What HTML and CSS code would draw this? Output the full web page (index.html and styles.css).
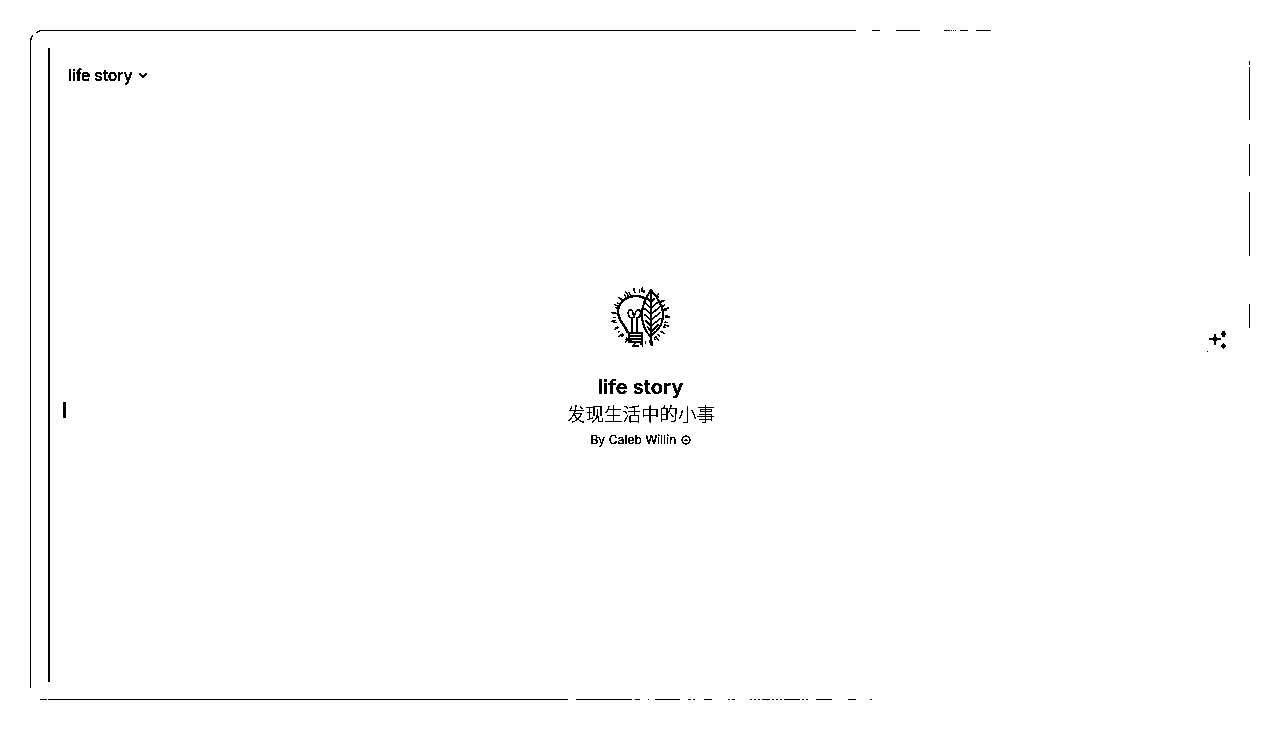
FILE: index.html
```html
<!DOCTYPE html>
<html lang="en">
<head>
    <meta charset="UTF-8">
    <meta name="viewport" content="width=device-width, initial-scale=1.0">
    <title>life story</title>
    <link rel="stylesheet" href="styles.css">
</head>
<body>
    <svg class="defs" width="0" height="0">
        <filter id="threshold" color-interpolation-filters="sRGB">
            <feColorMatrix type="saturate" values="0"/>
            <feComponentTransfer>
                <feFuncR type="discrete" tableValues="0 0 0 1"/>
                <feFuncG type="discrete" tableValues="0 0 0 1"/>
                <feFuncB type="discrete" tableValues="0 0 0 1"/>
            </feComponentTransfer>
        </filter>
    </svg>

    <div class="page">
        <!-- window edge, broken up like the reference -->
        <svg class="frame" width="1280" height="729" viewBox="0 0 1280 729">
            <path d="M30.5 688V44Q30.5 37 33 35M36 33Q38 31 41 30.5H856M872 30.5H880M896 30.5H920M944 30.5H950M951 30.5H952M953 30.5H954M955 30.5H956M960 30.5H968M976 30.5H991"/>
            <path d="M1249.5 61V65M1249.5 67V120M1249.5 144V176M1249.5 192V256M1249.5 304V328"/>
            <path d="M40 699.5H47M48 699.5H568M576 699.5H632M635 699.5H640M648 699.5H649M655 699.5H680M688 699.5H691M693 699.5H695M704 699.5H712M728 699.5H730M732 699.5H735M750 699.5H752M754 699.5H756M758 699.5H760M762 699.5H770M772 699.5H774M776 699.5H778M780 699.5H782M784 699.5H800M802 699.5H804M806 699.5H808M816 699.5H832M848 699.5H856M870 699.5H872"/>
        </svg>

        <div class="pane">
            <header class="topbar">
                <span class="model-name">life story</span>
                <svg class="chevron" width="10" height="10" viewBox="0 0 10 10"><path d="M1.5 3.5L5 7L8.5 3.5"/></svg>
            </header>

            <main class="welcome">
                <svg class="logo" width="64" height="64" viewBox="0 0 64 64">
                    <g transform="translate(0 2)">
                        <circle class="rays" cx="32.5" cy="29" r="26"/>
                        <circle class="rays rays-short" cx="32.5" cy="29" r="27"/>
                        <!-- bulb -->
                        <path class="bulb-glass" d="M20 45C18 38 10 33 10 24C10 14 19 8 28 8C33 8 37 10 40 12"/>
                        <path d="M21 45H35M21 48H35M21 51H35M21 54H34M24 58H31"/>
                        <path d="M21 45V55M34 45V55"/>
                        <path d="M24 45V30C20 30 19 23 22 22C25 21 25 26 26 29C27 26 28 21 31 22C34 23 33 29 29 30V45"/>
                        <!-- leaf -->
                        <path class="leaf" d="M43 2C38 9 34 17 34 26C34 36 37 43 42 48C49 44 55 37 55 26C55 17 49 9 43 2Z"/>
                        <path class="rib" d="M43 3V48L44 58"/>
                        <path d="M43 14L39 10M43 14L47 10M43 20L37 15M43 20L50 14M43 26L36 20M43 26L52 19M43 32L36 26M43 32L53 24M43 38L37 32M43 38L53 30M43 44L39 38M43 44L51 36"/>
                    </g>
                </svg>
                <h1 class="title">life story</h1>
                <p class="tagline">发现生活中的小事</p>
                <p class="byline">By Caleb Willin
                    <svg class="author-icon" width="10" height="10" viewBox="0 0 10 10"><circle cx="5" cy="5" r="4"/><path d="M3.5 5H6.5"/></svg>
                </p>
            </main>
        </div>

        <span class="handle"></span>

        <svg class="spark" width="24" height="24" viewBox="0 0 24 24">
            <path d="M9 2L10.4 6.6L15.5 8L10.4 9.4L9 14.5L7.6 9.4L2.5 8L7.6 6.6Z"/>
            <path d="M17.5 -0.5L19 1.5L20 3L19 4.5L17.5 6.5L16 4.5L15 3L16 1.5Z"/>
            <path d="M17.5 11.5L18.6 14L20.5 15L18.6 16L17.5 18.5L16.4 16L14.5 15L16.4 14Z"/>
            <rect x="1" y="20" width="1" height="1"/>
        </svg>
    </div>
</body>
</html>
```

FILE: styles.css
```css
body {
    margin: 0;
    background: #ffffff;
    color: #000000;
    font-family: Inter, "Noto Sans CJK SC", sans-serif;
}

.defs {
    display: block;
    height: 0;
}

.page {
    position: relative;
    display: flex;
    box-sizing: border-box;
    height: 729px;
    padding: 48px 48px 47px;
    overflow: hidden;
    background: #ffffff;
    filter: url(#threshold);
}

.frame {
    position: absolute;
    top: 0;
    left: 0;
}

.frame path {
    fill: none;
    stroke: #000000;
    stroke-width: 1;
}

.pane {
    flex: 1;
    display: flex;
    flex-direction: column;
    border-left: 2px solid #000000;
}

.topbar {
    display: flex;
    align-items: center;
    gap: 5px;
    height: 54px;
    padding-left: 18px;
    font-size: 16px;
    font-weight: 500;
    letter-spacing: -0.2px;
}

.chevron path {
    fill: none;
    stroke: #000000;
    stroke-width: 1.6;
}

.welcome {
    flex: 1;
    display: flex;
    flex-direction: column;
    align-items: center;
    justify-content: center;
    padding: 0 2px 48px 0;
}

.logo {
    margin-bottom: 24px;
}

.logo path {
    fill: none;
    stroke: #000000;
    stroke-width: 1.2;
}

.logo .bulb-glass {
    stroke-width: 2;
}

.logo .leaf {
    fill: #ffffff;
    stroke-width: 1.6;
}

.logo .rib {
    stroke-width: 1.6;
}

.logo .rays {
    fill: none;
    stroke: #000000;
    stroke-width: 3;
    stroke-dasharray: 1 4;
}

.logo .rays-short {
    stroke-width: 5;
    stroke-dasharray: 1 7;
}

.title {
    margin: 0 0 0 1px;
    font-size: 20px;
    line-height: 26px;
    font-weight: 600;
    letter-spacing: 0.1px;
}

.tagline {
    margin: 1px 0 0 2px;
    font-size: 18.5px;
    font-weight: 300;
    line-height: 26px;
}

.byline {
    display: flex;
    align-items: center;
    gap: 4px;
    margin: 3px 0 0 1px;
    font-size: 12px;
    line-height: 20px;
    letter-spacing: 0.1px;
}

.author-icon circle,
.author-icon path {
    fill: none;
    stroke: #000000;
    stroke-width: 1;
}

.handle {
    position: absolute;
    top: 402px;
    left: 63px;
    width: 3px;
    height: 16px;
    background: #000000;
}

.spark {
    position: absolute;
    top: 331px;
    left: 1206px;
}

.spark path,
.spark rect {
    fill: #000000;
}
```
